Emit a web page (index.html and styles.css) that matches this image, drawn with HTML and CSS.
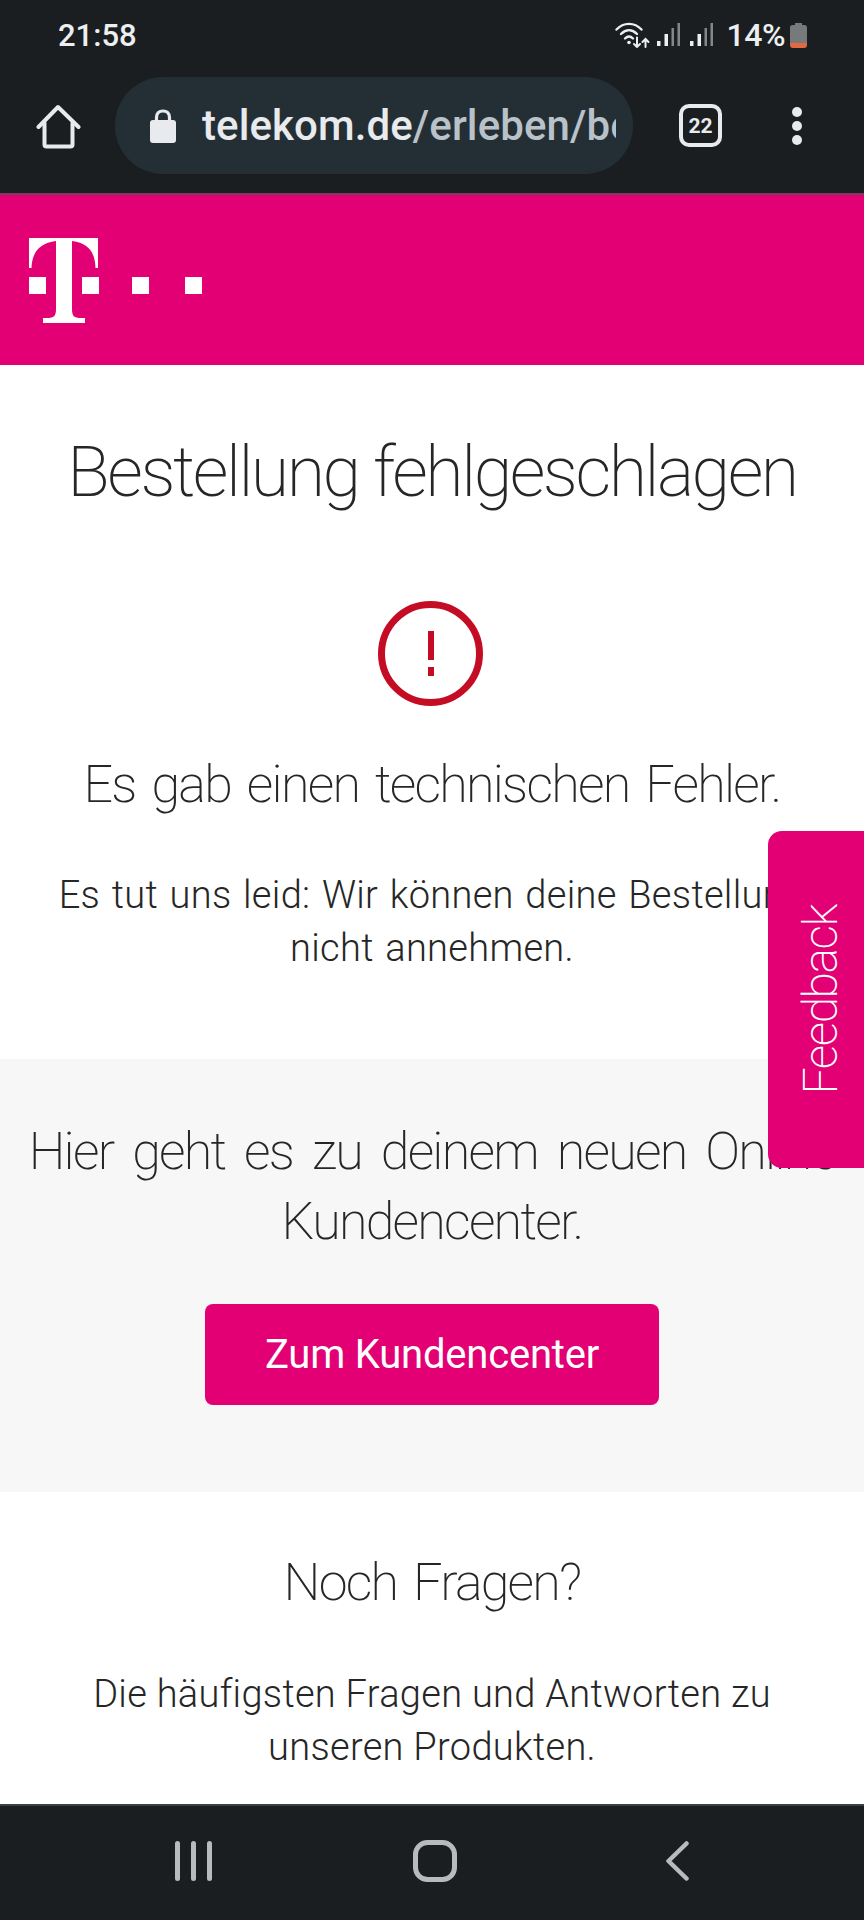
FILE: index.html
```html
<!DOCTYPE html>
<html lang="de">
<head>
  <meta charset="UTF-8">
  <meta name="viewport" content="width=device-width, initial-scale=1.0">
  <title>Bestellung fehlgeschlagen</title>
  <link rel="stylesheet" href="styles.css">
</head>
<body>
  <div class="statusbar">
    <span class="time">21:58</span>
    <div class="status-right">
      <svg class="wifi" width="35" height="26" viewBox="0 0 35 26" fill="none" stroke="#eceef0" stroke-width="2.400" stroke-linecap="round">
        <path d="M1.500 7.500C8.500 0 19.500 0 26.500 7.500"/>
        <path d="M6 12C11 7 17 7 22 12"/>
        <path d="M10 16.500C12.500 14 15.500 14 18 16.500"/>
        <circle cx="14" cy="20.500" r="1.800" fill="#eceef0" stroke="none"/>
        <path d="M22 15.500V25M19 22L22 25L25 22" stroke-width="2"/>
        <path d="M30.500 25V17M27.500 20L30.500 17L33.500 20" stroke-width="2"/>
      </svg>
      <svg class="bars bars-one" width="23" height="24" viewBox="0 0 23 24"><rect x="0" y="18" width="3.500" height="5" fill="#eceef0"/><rect x="7.500" y="11" width="3.500" height="12" fill="#eceef0"/><rect x="14.500" y="5" width="2.500" height="18" fill="#84878a"/><rect x="20.500" y="0" width="2.500" height="23" fill="#84878a"/></svg>
      <svg class="bars bars-two" width="23" height="24" viewBox="0 0 23 24"><rect x="0" y="18" width="3.500" height="5" fill="#eceef0"/><rect x="7.500" y="11" width="3.500" height="12" fill="#eceef0"/><rect x="14.500" y="5" width="2.500" height="18" fill="#84878a"/><rect x="20.500" y="0" width="2.500" height="23" fill="#84878a"/></svg>
      <span class="battery-text">14%</span>
      <svg class="battery" width="17" height="25" viewBox="0 0 17 25"><path d="M5 0H12V2H14.500Q17 2 17 4.500V20H0V4.500Q0 2 2.500 2H5Z" fill="#77797b"/><path d="M0 20H17V22Q17 25 14 25H3Q0 25 0 22Z" fill="#e2683f"/></svg>
    </div>
  </div>

  <div class="toolbar">
    <svg class="home-icon" width="45" height="45" viewBox="0 0 45 45" fill="none" stroke="#e8eaed" stroke-width="4" stroke-linejoin="round" stroke-linecap="round">
      <path d="M2.500 23L22 3L42.500 23"/>
      <path d="M8.500 19V40.500Q8.500 42.500 10.500 42.500H34.500Q36.500 42.500 36.500 40.500V19"/>
    </svg>
    <div class="urlbar">
      <svg class="lock" width="26" height="34" viewBox="0 0 26 34"><path d="M6.500 14V8.500C6.500 4.500 9 2 13 2S19.500 4.500 19.500 8.500V14" fill="none" stroke="#e8eaed" stroke-width="3.200"/><rect x="0" y="11" width="26" height="23" rx="3" fill="#e8eaed"/></svg>
      <div class="url"><span class="url-host">telekom.de</span>/erleben/bestellung</div>
    </div>
    <div class="tabs">22</div>
    <div class="dots"><i></i><i></i><i></i></div>
  </div>

  <header class="brand">
    <svg class="logo" width="174" height="85" viewBox="0 0 174 85" fill="#fff">
      <path d="M0 0H69V30H66.500C66 15 60 5 43 3V71C43 78 45 80 52 80H56V85H14V80H18C25 80 27 78 27 71V3C10 5 3 15 2.500 30H0Z"/>
      <rect x="0" y="39" width="17" height="17"/>
      <rect x="53" y="39" width="17" height="17"/>
      <rect x="103" y="39" width="17" height="17"/>
      <rect x="156" y="39" width="17" height="17"/>
    </svg>
  </header>

  <main class="content">
    <section class="result">
      <h1>Bestellung fehlgeschlagen</h1>
      <div class="alert-icon"><span class="mark"></span><span class="point"></span></div>
      <h2>Es gab einen technischen Fehler.</h2>
      <p>Es tut uns leid: Wir können deine Bestellung<br>nicht annehmen.</p>
    </section>
    <section class="portal">
      <h2>Hier geht es zu deinem neuen Online<br>Kundencenter.</h2>
      <a class="btn" href="#">Zum Kundencenter</a>
    </section>
    <section class="faq">
      <h2>Noch Fragen?</h2>
      <p>Die häufigsten Fragen und Antworten zu<br>unseren Produkten.</p>
    </section>
  </main>

  <div class="feedback"><span>Feedback</span></div>

  <nav class="navbar">
    <svg class="nav-recent" width="37" height="40" viewBox="0 0 37 40" fill="#b9babb"><rect x="0" y="0" width="5" height="40" rx="2.500"/><rect x="16" y="0" width="5" height="40" rx="2.500"/><rect x="32" y="0" width="5" height="40" rx="2.500"/></svg>
    <svg class="nav-home" width="44" height="42" viewBox="0 0 44 42" fill="none" stroke="#b9babb" stroke-width="5"><rect x="2.500" y="2.500" width="39" height="37" rx="12"/></svg>
    <svg class="nav-back" width="23" height="40" viewBox="0 0 23 40" fill="none" stroke="#b9babb" stroke-width="4.500" stroke-linecap="round" stroke-linejoin="round"><path d="M20.500 2.500L2.500 20L20.500 37.500"/></svg>
  </nav>
</body>
</html>
```

FILE: styles.css
```css
* {
  box-sizing: border-box;
}
html, body {
  height: 100%;
}
body {
  margin: 0;
  width: 864px;
  height: 1920px;
  overflow: hidden;
  position: relative;
  display: flex;
  flex-direction: column;
  background: #fff;
  color: #262626;
  font-family: Roboto, "Liberation Sans", sans-serif;
  font-weight: 300;
}

/* phone chrome */
.statusbar {
  height: 70px;
  flex: none;
  background: #1a1e21;
  color: #eceef0;
  display: flex;
  align-items: center;
  justify-content: space-between;
  padding: 0 57px 0 58px;
  font-weight: 500;
}
.time {
  font-size: 31px;
}
.status-right {
  display: flex;
  align-items: center;
}
.bars-one {
  margin-left: 7px;
}
.bars-two {
  margin-left: 10px;
}
.battery-text {
  font-size: 32px;
  margin-left: 14px;
  letter-spacing: -0.5px;
}
.battery {
  margin-left: 5px;
}
.toolbar {
  height: 125px;
  flex: none;
  background: #1a1e21;
  border-bottom: 2px solid #7a3c5f;
  display: flex;
  align-items: flex-start;
  padding: 7px 0 0 36px;
  color: #e8eaed;
}
.home-icon {
  margin-top: 27px;
  flex: none;
}
.urlbar {
  width: 518px;
  height: 97px;
  margin-left: 34px;
  flex: none;
  background: #242f35;
  border-radius: 48px;
  display: flex;
  align-items: center;
  padding: 0 17px 0 35px;
}
.lock {
  flex: none;
}
.url {
  margin-left: 26px;
  font-size: 42px;
  font-weight: 500;
  letter-spacing: 0.1px;
  color: #b9c2c9;
  white-space: nowrap;
  overflow: hidden;
}
.url-host {
  color: #e8eaed;
}
.tabs {
  width: 43px;
  height: 43px;
  margin: 27px 0 0 46px;
  border: 4px solid #e8eaed;
  border-radius: 10px;
  flex: none;
  display: flex;
  align-items: center;
  justify-content: center;
  font-size: 21px;
  font-weight: 700;
}
.dots {
  margin: 30px 0 0 70px;
  display: flex;
  flex-direction: column;
  gap: 4px;
}
.dots i {
  display: block;
  width: 10px;
  height: 10px;
  border-radius: 50%;
  background: #e8eaed;
}
.navbar {
  height: 116px;
  flex: none;
  background: #1a1e21;
  border-top: 2px solid #3a4045;
  display: flex;
  align-items: center;
  padding: 0 0 5px 175px;
}
.nav-home {
  margin-left: 201px;
}
.nav-back {
  margin-left: 209px;
}

/* page */
.brand {
  height: 170px;
  flex: none;
  background: #e20074;
  padding: 43px 0 0 29px;
}
.logo {
  display: block;
}
.content {
  flex: 1;
  overflow: hidden;
  text-align: center;
}
h1 {
  margin: 0;
  font-size: 70px;
  line-height: 84px;
  font-weight: 200;
  letter-spacing: -2.5px;
  white-space: nowrap;
}
h2 {
  margin: 0;
  font-size: 52px;
  line-height: 70px;
  font-weight: 200;
  letter-spacing: -1.75px;
  word-spacing: 5px;
  white-space: nowrap;
}
p {
  margin: 0;
  font-size: 38px;
  line-height: 53px;
  letter-spacing: 0.3px;
  white-space: nowrap;
}
.result {
  height: 694px;
  padding-top: 65px;
}
.alert-icon {
  width: 105px;
  height: 105px;
  margin: 87px 0 44px 378px;
  border: 7px solid #c40c24;
  border-radius: 50%;
  display: flex;
  flex-direction: column;
  align-items: center;
  justify-content: center;
}
.mark {
  width: 6px;
  height: 29px;
  background: #c40c24;
}
.point {
  width: 6px;
  height: 9px;
  margin-top: 7px;
  background: #c40c24;
}
.result p {
  margin-top: 49px;
  word-spacing: 2px;
}
.portal {
  height: 433px;
  background: #f7f7f7;
  padding-top: 58px;
}
.portal h2 {
  word-spacing: 8px;
}
.btn {
  display: block;
  width: 454px;
  height: 101px;
  margin: 47px 0 0 205px;
  border-radius: 8px;
  background: #e20074;
  color: #fff;
  font-size: 40px;
  font-weight: 400;
  letter-spacing: -0.2px;
  line-height: 101px;
  text-decoration: none;
}
.faq {
  padding-top: 56px;
}
.faq p {
  margin-top: 50px;
}
.feedback {
  position: absolute;
  top: 831px;
  right: 0;
  width: 96px;
  height: 337px;
  padding-left: 8px;
  background: #e20074;
  border-radius: 14px 0 0 14px;
  display: flex;
  align-items: center;
  justify-content: center;
  color: #fff;
}
.feedback span {
  writing-mode: vertical-rl;
  transform: rotate(180deg);
  font-size: 48px;
  font-weight: 200;
  letter-spacing: -1.5px;
}
```
